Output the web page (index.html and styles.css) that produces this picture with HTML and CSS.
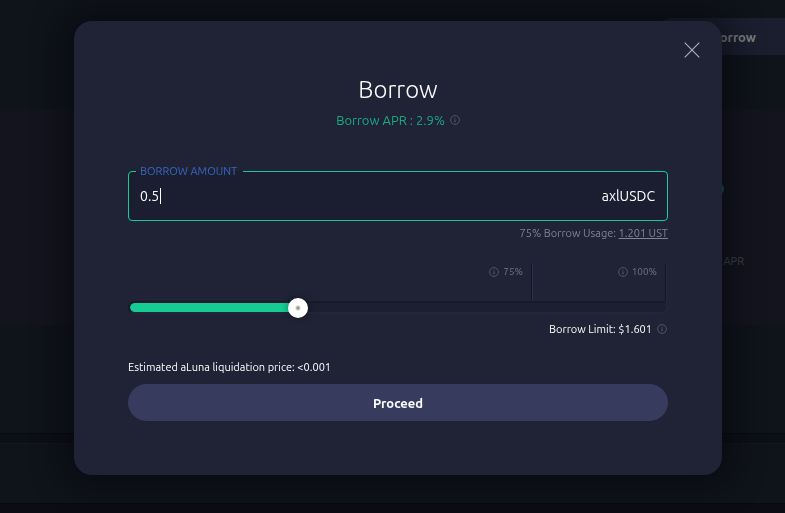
FILE: index.html
```
<!DOCTYPE html>
<html lang="en">
<head>
<meta charset="utf-8">
<meta name="viewport" content="width=device-width, initial-scale=1">
<title>Borrow</title>
<link rel="stylesheet" href="styles.css">
</head>
<body>
<svg class="sprite" aria-hidden="true">
  <symbol id="info" viewBox="0 0 10 10"><circle cx="5" cy="5" r="4.4" fill="none" stroke="currentColor" stroke-width=".8"/><path d="M5 4.3v3M5 2.6v.9" stroke="currentColor" stroke-width=".9"/></symbol>
</svg>
<div class="page">
  <header class="top"><a class="tab" href="#borrow">Borrow</a></header>
  <section class="summary">
    <span class="dot"></span>
    <span class="apr">APR</span>
  </section>
  <section class="gap"></section>
  <section class="divider"></section>
  <section class="list"></section>
</div>
<div class="overlay">
  <main class="dialog" role="dialog" aria-labelledby="title">
    <button class="close" type="button" aria-label="Close"><svg viewBox="0 0 16 16"><path d="M.7.7l14.6 14.6M15.3.7L.7 15.3" stroke="currentColor" stroke-width="1.1"/></svg></button>
    <h1 id="title">Borrow</h1>
    <p class="rate">Borrow APR : 2.9% <svg class="info"><use href="#info"/></svg></p>
    <fieldset class="field">
      <legend><label for="amount">BORROW AMOUNT</label></legend>
      <input id="amount" type="text" value="0.5">
      <span class="caret"></span>
      <span class="unit">axlUSDC</span>
    </fieldset>
    <p class="usage">75% Borrow Usage: <a href="#max">1.201 UST</a></p>
    <div class="ltv">
      <div class="marks">
        <span class="mark safe"><svg class="info"><use href="#info"/></svg>75%</span>
        <span class="mark full"><svg class="info"><use href="#info"/></svg>100%</span>
      </div>
      <input class="slider" type="range" min="0" max="1000" value="307" aria-label="Loan to value">
    </div>
    <p class="limit">Borrow Limit: $1.601 <svg class="info"><use href="#info"/></svg></p>
    <p class="estimate">Estimated aLuna liquidation price: &lt;0.001</p>
    <button class="proceed" type="button">Proceed</button>
  </main>
</div>
</body>
</html>
```
FILE: styles.css
```
* { box-sizing: border-box; }
body {
  margin: 0;
  min-height: 100vh;
  background: #0b0c14;
  color: #fff;
  font: 11px/16px Ubuntu, "Noto Sans", sans-serif;
}
h1, p { margin: 0; }
button, input { font: inherit; color: inherit; }
.sprite { position: absolute; width: 0; height: 0; }

.page { display: flex; flex-direction: column; min-height: 100vh; }
.top { display: flex; justify-content: flex-end; height: 109px; padding-top: 18px; background: #0f131a; }
.tab {
  display: flex;
  align-items: center;
  justify-content: flex-end;
  width: 131px;
  height: 37px;
  padding-right: 29px;
  border-radius: 20px 0 0 20px;
  background: #1b1e2e;
  color: #7d7d80;
  font-size: 13px;
  font-weight: 700;
  text-decoration: none;
}
.summary { display: flex; flex-direction: column; align-items: flex-end; height: 216px; padding: 74px 41px 0 0; background: #14141f; }
.dot { width: 12px; height: 12px; margin-right: 20px; border-radius: 50%; background: #0b6345; }
.apr { margin-top: 58px; color: #45484d; }
.gap { height: 108px; background: #0f131a; }
.divider { height: 11px; border-top: 1px solid #090a10; border-bottom: 1px solid #141620; background: #0c0f15; }
.list { height: 60px; border-bottom: 1px solid #08090f; background: #0f131a; }

.overlay { position: fixed; inset: 0; display: flex; justify-content: center; align-items: flex-start; padding: 21px 0 0 11px; }
.dialog {
  position: relative;
  width: 648px;
  padding: 52px 54px 54px;
  border-radius: 18px;
  background: #202236;
  box-shadow: 0 0 33px 8px rgba(5, 5, 10, .6);
}
.close { position: absolute; top: 21px; right: 22px; width: 16px; height: 16px; padding: 0; border: 0; background: none; color: #b0b1b9; }
.close svg { display: block; width: 16px; height: 16px; }
h1 { height: 34px; font: 300 24px/34px Ubuntu, "Noto Sans", "Open Sans", sans-serif; text-align: center; }
.info { width: 10px; height: 10px; color: #62636f; }
.rate { display: flex; justify-content: center; align-items: center; gap: 5px; margin-top: 5px; color: #1aaa82; font-size: 13px; }
.field {
  position: relative;
  display: flex;
  align-items: center;
  height: 58px;
  margin: 35px 0 0;
  padding: 0 12px 8px 7px;
  border: 1px solid #15cc93;
  border-radius: 4px;
  background: #1b1e30;
}
.field legend { padding: 0 6px 0 4px; color: #3867c4; font-size: 11px; line-height: 16px; }
.field input { flex: 1; min-width: 0; height: 33px; padding: 0 4px; border: 0; outline: 0; background: none; font-size: 14px; }
.caret { position: absolute; left: 31px; top: 9px; width: 1px; height: 16px; background: #fff; }
.unit { font-size: 14px; }
.usage { margin-top: 4px; color: #82838e; text-align: right; }
.usage a { color: inherit; }
.ltv { margin-top: 23px; }
.marks { display: grid; grid-template-columns: 3fr 1fr; height: 37px; }
.mark { display: flex; justify-content: flex-end; align-items: flex-start; gap: 4px; padding-right: 8px; border-right: 1px solid #121421; box-shadow: 1px 0 #2c2f4d; color: #747580; font-size: 10px; }
.mark .info { margin-top: 3px; }
.safe { margin-right: 1px; }
.full { margin-right: 2px; box-shadow: 1px 0 #26283e; }
.slider {
  -webkit-appearance: none;
  appearance: none;
  display: block;
  width: 100%;
  height: 13px;
  margin: 0;
  border: 2px solid;
  border-color: #181a2a #23253a #23253a #181a2a;
  border-radius: 7px;
  background: linear-gradient(90deg, #15cc93 31%, #1c1f30 31%) padding-box;
}
.slider::-webkit-slider-thumb {
  -webkit-appearance: none;
  width: 20px;
  height: 20px;
  border-radius: 50%;
  background: radial-gradient(circle, #999 0 1px, #fff 3px);
  box-shadow: 0 0 6px 1px rgba(0, 0, 0, .3);
}
.limit { display: flex; justify-content: flex-end; align-items: center; gap: 5px; margin: 7px 1px 0 0; }
.estimate { margin-top: 22px; }
.proceed { display: block; width: 100%; height: 37px; margin-top: 9px; border: 0; border-radius: 20px; background: #373c5f; font-size: 13px; font-weight: 700; }
```
